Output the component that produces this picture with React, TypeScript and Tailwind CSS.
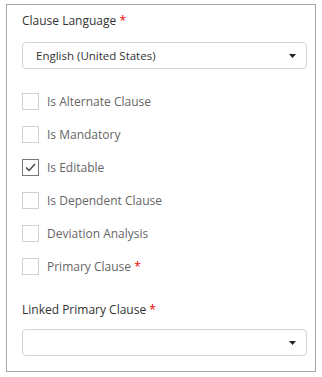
import React from "react"

const options = [
  { label: "Is Alternate Clause", checked: false },
  { label: "Is Mandatory", checked: false },
  { label: "Is Editable", checked: true },
  { label: "Is Dependent Clause", checked: false },
  { label: "Deviation Analysis", checked: false },
  { label: "Primary Clause", checked: false, required: true },
]

const Caret = () => (
  <svg width="7" height="4" viewBox="0 0 7 4" className="shrink-0">
    <path d="M0 0h7L3.5 4z" fill="#222" />
  </svg>
)

const Select = ({ value }: { value?: string }) => (
  <div className="flex h-[27px] items-center justify-between rounded-[4px] border border-[#d4d4d4] bg-white pl-[13px] pr-[10px]">
    <span className="text-[11.5px] text-[#333]">{value}</span>
    <Caret />
  </div>
)

const Check = ({ checked }: { checked: boolean }) => (
  <div
    className={`flex h-[17px] w-[17px] shrink-0 items-center justify-center border bg-white ${
      checked ? "border-[#777]" : "border-[#d0d0d0]"
    }`}
  >
    {checked && (
      <svg width="11" height="9" viewBox="0 0 11 9">
        <path d="M1 4.5l3 3L10 1" fill="none" stroke="#444" strokeWidth="1.4" />
      </svg>
    )}
  </div>
)

export default function App() {
  return (
    <div
      className="h-[377px] w-[322px] bg-white pl-[6px] pt-[4px]"
      style={{ fontFamily: '"Open Sans", "Noto Sans", sans-serif' }}
    >
      <div className="h-[368px] w-[310px] border border-[#a6a6a6] pl-[15px] pr-[8px] pt-[8px]">
        <div className="text-[12px] leading-[16px] text-[#333]">
          Clause Language <span className="text-[#e00]">*</span>
        </div>
        <div className="mt-[13px]">
          <Select value="English (United States)" />
        </div>

        <ul className="mt-[24px] flex flex-col gap-[16px]">
          {options.map((o) => (
            <li key={o.label} className="flex h-[17px] items-center gap-[8px]">
              <Check checked={o.checked} />
              <span className="text-[12px] leading-[17px] text-[#666]">
                {o.label}
                {o.required && <span className="text-[#e00]"> *</span>}
              </span>
            </li>
          ))}
        </ul>

        <div className="mt-[27px] text-[12px] leading-[16px] text-[#333]">
          Linked Primary Clause <span className="text-[#e00]">*</span>
        </div>
        <div className="mt-[11px]">
          <Select />
        </div>
      </div>
    </div>
  )
}
